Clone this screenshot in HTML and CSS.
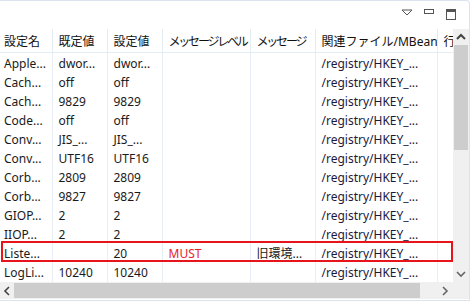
FILE: index.html
```html
<!DOCTYPE html>
<html lang="ja">
<head>
  <meta charset="UTF-8" />
  <title>設定一覧</title>
  <link rel="stylesheet" href="styles.css">
</head>
<body>
  <div class="view">
    <div class="toolbar">
      <svg class="tool" width="12" height="8" viewBox="0 0 12 8"><polygon points="1,1 11,1 6,6" fill="none" stroke="#555" stroke-width="1"/></svg>
      <svg class="tool" width="12" height="8" viewBox="0 0 12 8"><rect x="1.5" y="1.5" width="9" height="4" fill="none" stroke="#555" stroke-width="1"/></svg>
      <svg class="tool" width="12" height="12" viewBox="0 0 12 12"><rect x="1.5" y="1.5" width="9" height="10" fill="none" stroke="#555" stroke-width="1"/><line x1="1.5" y1="3" x2="10.5" y2="3" stroke="#555" stroke-width="2"/></svg>
    </div>

    <div class="main">
      <div class="grid">
        <table>
          <colgroup>
            <col style="width:52px"><col style="width:55px"><col style="width:55px"><col style="width:88px">
            <col style="width:65px"><col style="width:122px"><col style="width:40px">
          </colgroup>
          <thead>
            <tr><th class="first">設定名</th><th>既定値</th><th>設定値</th><th class="narrow">メッセージレベル</th><th class="narrow">メッセージ</th><th>関連ファイル/MBean</th><th>行</th></tr>
          </thead>
          <tbody>
            <tr><td class="first">Apple...</td><td>dwor...</td><td>dwor...</td><td></td><td></td><td class="path">/registry/HKEY_...</td><td></td></tr>
            <tr><td class="first">Cach...</td><td>off</td><td>off</td><td></td><td></td><td class="path">/registry/HKEY_...</td><td></td></tr>
            <tr><td class="first">Cach...</td><td>9829</td><td>9829</td><td></td><td></td><td class="path">/registry/HKEY_...</td><td></td></tr>
            <tr><td class="first">Code...</td><td>off</td><td>off</td><td></td><td></td><td class="path">/registry/HKEY_...</td><td></td></tr>
            <tr><td class="first">Conv...</td><td>JIS_...</td><td>JIS_...</td><td></td><td></td><td class="path">/registry/HKEY_...</td><td></td></tr>
            <tr><td class="first">Conv...</td><td>UTF16</td><td>UTF16</td><td></td><td></td><td class="path">/registry/HKEY_...</td><td></td></tr>
            <tr><td class="first">Corb...</td><td>2809</td><td>2809</td><td></td><td></td><td class="path">/registry/HKEY_...</td><td></td></tr>
            <tr><td class="first">Corb...</td><td>9827</td><td>9827</td><td></td><td></td><td class="path">/registry/HKEY_...</td><td></td></tr>
            <tr><td class="first">GIOP...</td><td>2</td><td>2</td><td></td><td></td><td class="path">/registry/HKEY_...</td><td></td></tr>
            <tr><td class="first">IIOP...</td><td>2</td><td>2</td><td></td><td></td><td class="path">/registry/HKEY_...</td><td></td></tr>
            <tr class="marked"><td class="first">Liste...</td><td></td><td>20</td><td class="must">MUST</td><td>旧環境...</td><td class="path">/registry/HKEY_...</td><td></td></tr>
            <tr><td class="first">LogLi...</td><td>10240</td><td>10240</td><td></td><td></td><td class="path">/registry/HKEY_...</td><td></td></tr>
          </tbody>
        </table>
        <div class="highlight"></div>
      </div>
      <div class="vscroll">
        <svg width="16" height="16" viewBox="0 0 16 16"><polyline points="4,10 8,6 12,10" fill="none" stroke="#444" stroke-width="2"/></svg>
        <div class="vthumb"></div>
        <div class="vtrack"></div>
        <svg width="16" height="16" viewBox="0 0 16 16"><polyline points="4,6 8,10 12,6" fill="none" stroke="#666" stroke-width="1.6"/></svg>
      </div>
      <div class="hscroll">
        <svg width="14" height="16" viewBox="0 0 14 16"><polyline points="9,4 5,8 9,12" fill="none" stroke="#444" stroke-width="1.6"/></svg>
        <div class="hthumb"></div>
        <div class="htrack"></div>
        <svg width="16" height="16" viewBox="0 0 16 16"><polyline points="6,4 10,8 6,12" fill="none" stroke="#666" stroke-width="1.6"/></svg>
      </div>
      <div class="corner"></div>
    </div>
  </div>
</body>
</html>
```

FILE: styles.css
```css
body {
  margin: 0;
  background: #ffffff;
  font-family: "Noto Sans", "Noto Sans CJK JP", sans-serif;
  font-size: 12px;
  color: #1a1a1a;
}
.view {
  width: 469px;
  height: 299px;
  border-top: 1px solid #dbe3ec;
  border-right: 1px solid #dbe3ec;
  border-bottom: 1px solid #dbe3ec;
  border-top-right-radius: 4px;
  display: flex;
  flex-direction: column;
  overflow: hidden;
}
.toolbar {
  height: 28px;
  display: flex;
  justify-content: flex-end;
  align-items: flex-start;
  gap: 10px;
  padding: 7px 12px 0 0;
  box-sizing: border-box;
}
.tool {
  display: block;
}
.toolbar .tool:first-child {
  margin-top: 1px;
}
.main {
  flex: 1;
  display: grid;
  grid-template-columns: 453px 16px;
  grid-template-rows: 253px 17px;
}
.grid {
  overflow: hidden;
  position: relative;
}
table {
  border-collapse: collapse;
  table-layout: fixed;
  width: 477px;
}
th {
  height: 23px;
  padding: 0 0 0 6px;
  text-align: left;
  font-weight: normal;
  color: #111;
  white-space: nowrap;
  overflow: hidden;
  border-left: 1px solid #e4ebf3;
  border-bottom: 1px solid #e4ebf3;
}
th.narrow {
  letter-spacing: -2.2px;
}
td {
  height: 19px;
  padding: 0 0 0 6px;
  white-space: nowrap;
  overflow: hidden;
  border-left: 1px solid #e8eef6;
  line-height: 19px;
}
th.first, td.first {
  border-left: none;
  padding-left: 4px;
}
tbody tr:first-child td {
  padding-top: 1px;
}
td.path {
  color: #1c1a3c;
}
td.must {
  color: #e8202a;
}
.highlight {
  position: absolute;
  left: 1px;
  top: 212px;
  width: 448px;
  height: 17px;
  border: 2px solid #e8141c;
}
.vscroll {
  background: #f0f0f0;
  display: flex;
  flex-direction: column;
}
.vscroll svg, .hscroll svg {
  display: block;
  flex: none;
}
.vthumb {
  height: 105px;
  background: #cdcdcd;
  margin: 0 1px;
}
.vtrack {
  flex: 1;
}
.hscroll {
  background: #f0f0f0;
  display: flex;
  align-items: center;
}
.hthumb {
  width: 406px;
  height: 15px;
  background: #cdcdcd;
}
.htrack {
  flex: 1;
}
.corner {
  background: #f0f0f0;
}
```
